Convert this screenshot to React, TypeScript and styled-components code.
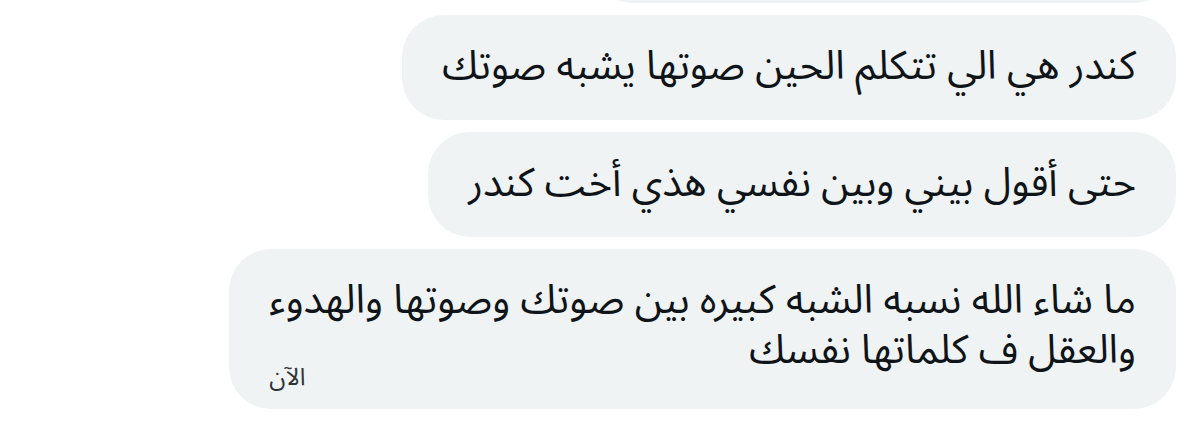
import React from "react";
import styled, { createGlobalStyle } from "styled-components";

const GlobalStyle = createGlobalStyle`
  html, body { margin: 0; padding: 0; background: #ffffff; }
  body { overflow: hidden; }
`;

const Viewport = styled.div`
  width: 1200px;
  height: 426px;
  overflow: hidden;
  background: #ffffff;
`;

const Thread = styled.div`
  direction: rtl;
  display: flex;
  flex-direction: column;
  align-items: flex-start;
  gap: 12px;
  padding-right: 24px;
  margin-top: -102px;
`;

const Bubble = styled.div<{ $width?: number }>`
  display: flex;
  flex-direction: column;
  align-items: flex-start;
  box-sizing: border-box;
  min-height: 105px;
  padding: 27px 40px 28px;
  border-radius: 42px;
  background: #eff3f4;
  color: #0f1419;
  font-family: "Noto Sans Arabic", "DejaVu Sans", sans-serif;
  width: ${(p) => (p.$width ? `${p.$width}px` : "auto")};
`;

const Line = styled.span`
  display: block;
  width: fit-content;
  font-size: 40px;
  line-height: 50px;
  white-space: nowrap;
`;

const Meta = styled.span`
  align-self: flex-end;
  margin: -10px 0 -9px;
  font-size: 24px;
  line-height: 24px;
  color: #2f3336;
`;

type Message = { lines: string[]; time?: string; width?: number };

const messages: Message[] = [
  { lines: [], width: 586 },
  { lines: ["كندر هي الي تتكلم الحين صوتها يشبه صوتك"] },
  { lines: ["حتى أقول بيني وبين نفسي هذي أخت كندر"] },
  {
    lines: [
      "ما شاء الله نسبه الشبه كبيره بين صوتك وصوتها والهدوء",
      "والعقل ف كلماتها نفسك",
    ],
    time: "الآن",
  },
];

export default function App() {
  return (
    <Viewport>
      <GlobalStyle />
      <Thread>
        {messages.map((m, i) => (
          <Bubble key={i} $width={m.width}>
            {m.lines.map((l, j) => (
              <Line key={j}>{l}</Line>
            ))}
            {m.time && <Meta>{m.time}</Meta>}
          </Bubble>
        ))}
      </Thread>
    </Viewport>
  );
}
